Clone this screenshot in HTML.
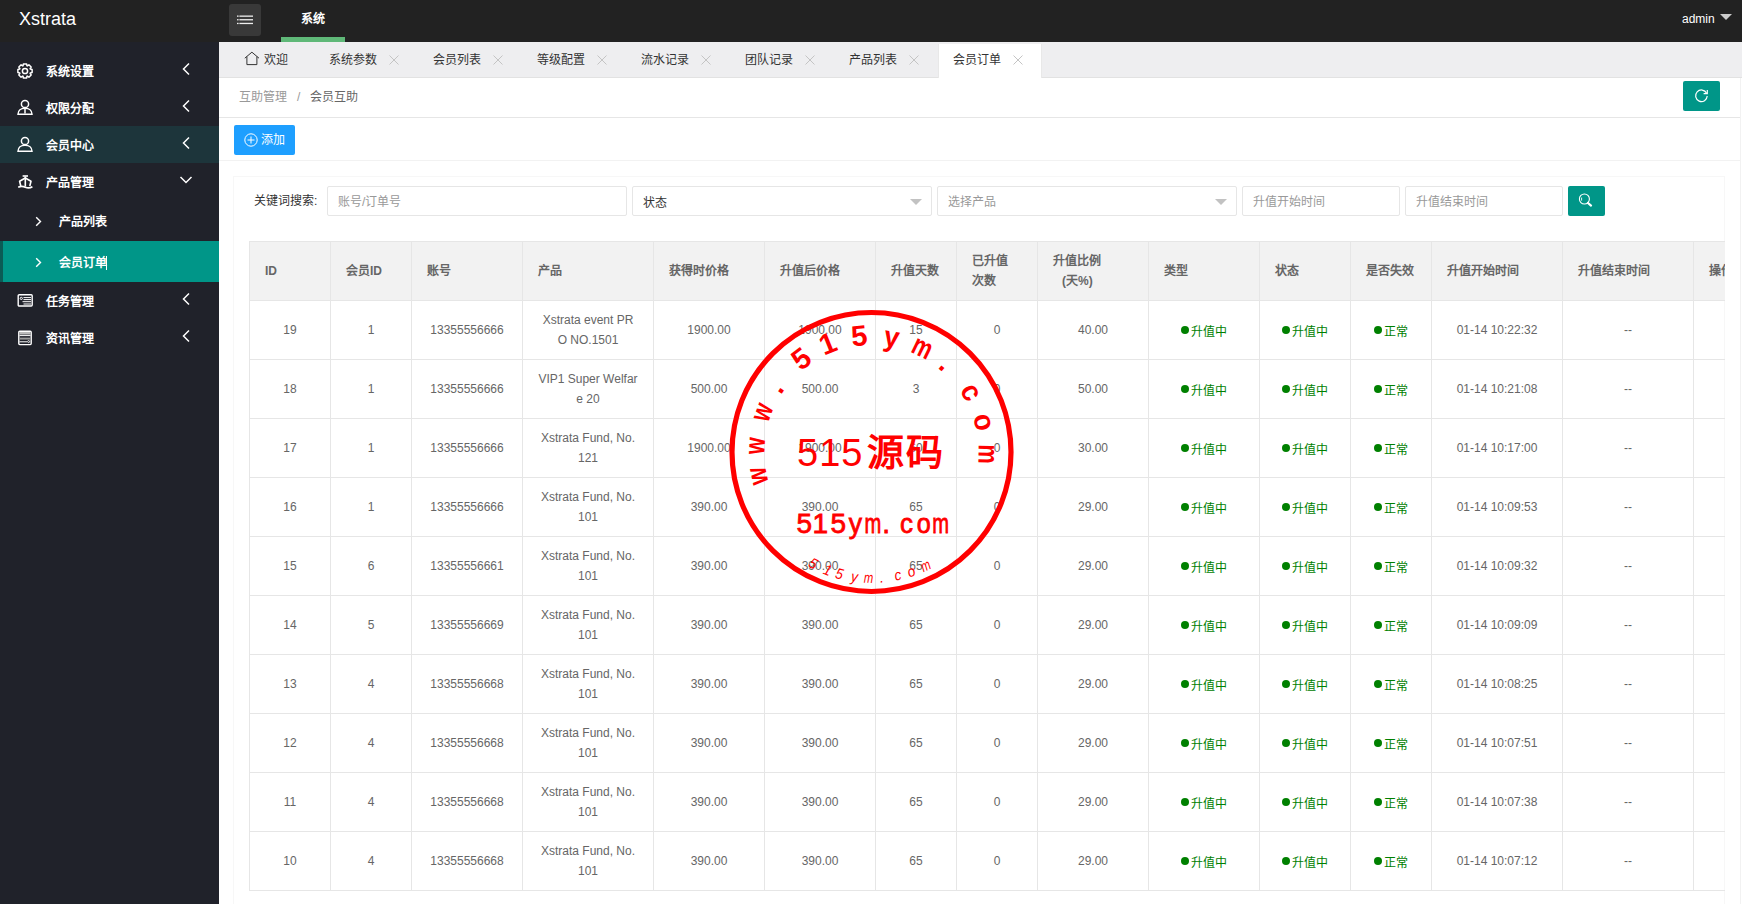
<!DOCTYPE html>
<html lang="zh-CN"><head><meta charset="utf-8"><title>admin</title>
<style>
*{margin:0;padding:0;box-sizing:border-box}
html,body{width:1742px;height:904px;overflow:hidden;background:#fff;font-family:"Liberation Sans",sans-serif;font-size:12px;color:#666}
.abs{position:absolute}
#header{position:absolute;left:0;top:0;width:1742px;height:42px;background:#222}
#logo{position:absolute;left:19px;top:9px;color:#fff;font-size:18px;line-height:20px}
#hamb{position:absolute;left:229px;top:4px;width:32px;height:32px;background:#393939;border-radius:3px}
#hamb i{position:absolute;left:8px;width:15px;height:2px;background:#eee}
#sys{position:absolute;left:301px;top:12px;color:#fff;font-size:12px;line-height:14px;font-weight:bold}
#sysbar{position:absolute;left:281px;top:37px;width:64px;height:5px;background:#5FB878}
#admin{position:absolute;left:1682px;top:12px;color:#fff;font-size:12px;line-height:14px}
#tri{position:absolute;left:1720px;top:14px;width:0;height:0;border-left:6px solid transparent;border-right:6px solid transparent;border-top:6px solid #ccc}
#side{position:absolute;left:0;top:42px;width:219px;height:862px;background:#20222A}
.nav{position:absolute;left:0;width:219px;height:37px;color:#fff;font-weight:bold;font-size:12px}
.nav .t{position:absolute;left:46px;top:13px;line-height:14px}
.nav .ic{position:absolute;left:17px;top:10px;width:16px;height:16px}
.nav .ar{position:absolute;left:181px;top:10px;width:10px;height:14px}
.nav.hov{background:#1D353B}
.sub{position:absolute;left:0;width:219px;height:41px;color:#fff;font-weight:bold;font-size:12px}
.sub .t{position:absolute;left:59px;top:15px;line-height:14px}
.sub .ar{position:absolute;left:35px;top:16px;width:7px;height:11px}
.sub.act{background:#009688}
.sub.act:before{content:"";position:absolute;left:0;top:0;width:3px;height:41px;background:#0b5b55}
#tabs{position:absolute;left:219px;top:42px;width:1523px;height:36px;background:#EEEEF0;border-bottom:1px solid #e2e2e2}
.tab{position:absolute;top:0;height:35px;color:#333;font-size:12px}
.tab .t{position:absolute;top:11px;line-height:14px;white-space:nowrap}
.tab .x{position:absolute;top:13px;width:10px;height:10px}
.tab.act{background:#fff;top:2px;height:35px;box-shadow:-1px 0 0 #e8e8e8,1px 0 0 #e8e8e8}
#crumb{position:absolute;left:219px;top:78px;width:1521px;height:40px;border-bottom:1px solid #e6e6e6;background:#fff}
#crumb .c1{position:absolute;left:20px;top:12px;color:#999;line-height:14px}
#crumb .sl{position:absolute;left:78px;top:12px;color:#999;line-height:14px}
#crumb .c2{position:absolute;left:91px;top:12px;color:#666;line-height:14px}
#refresh{position:absolute;left:1683px;top:81px;width:37px;height:30px;background:#009688;border-radius:2px}
#addbtn{position:absolute;left:234px;top:125px;width:61px;height:30px;background:#1E9FFF;border-radius:2px;color:#fff}
#addbtn .t{position:absolute;left:27px;top:8px;line-height:14px;font-size:12px}
#addline{position:absolute;left:219px;top:160px;width:1521px;height:1px;background:#f2f2f2}
#card{position:absolute;left:233px;top:176px;width:1492px;height:740px;background:#fff;border:1px solid #f7f7f7}
.lbl{position:absolute;left:254px;top:194px;color:#333;line-height:14px}
.inp{position:absolute;top:186px;height:30px;border:1px solid #e6e6e6;border-radius:2px;background:#fff}
.inp .p{position:absolute;left:10px;top:8px;line-height:14px;color:#999;white-space:nowrap}
.inp .sel{position:absolute;top:12px;width:0;height:0;border-left:6px solid transparent;border-right:6px solid transparent;border-top:6px solid #c2c2c2}
#sbtn{position:absolute;left:1568px;top:186px;width:37px;height:30px;background:#009688;border-radius:2px}
.tbl{position:absolute;left:249px;top:241px;width:1476px;height:663px;overflow:hidden}
.thead{position:absolute;background:#f2f2f2}
.hl{position:absolute;left:0;width:1600px;height:1px;background:#e6e6e6}
.vl{position:absolute;top:0;width:1px;background:#e6e6e6}
.th{position:absolute;display:flex;align-items:center;padding-left:16px;color:#666;font-weight:bold;line-height:20px;white-space:nowrap}
.td{position:absolute;display:flex;padding-left:1px;align-items:center;justify-content:center;text-align:center;line-height:20px;color:#666;white-space:nowrap}
.td.g{color:#008000}
.dot{display:inline-block;width:8px;height:8px;border-radius:50%;background:#008000;margin-right:1px;vertical-align:0px}
#stamp{position:absolute;left:0;top:0;width:1742px;height:904px;pointer-events:none}
#rline{position:absolute;left:1740px;top:78px;width:1px;height:826px;background:#f2f2f2}
.td.g span{position:relative;top:2px}
.td.g .dot{vertical-align:2px;margin-right:2px}
#caret{position:absolute;left:106px;top:256px;width:1px;height:14px;background:#fff}

</style></head><body>
<div id="header">
  <div id="logo">Xstrata</div>
  <div id="hamb"><svg class="abs" style="left:8px;top:11px;width:16px;height:14px" viewBox="0 0 16 14"><g fill="#eee"><rect x="0" y="0.5" width="1.6" height="1.3"/><rect x="2.4" y="0.5" width="13.6" height="1.3"/><rect x="0" y="4.1" width="1.6" height="1.3"/><rect x="2.4" y="4.1" width="13.6" height="1.3"/><rect x="0" y="7.8" width="1.6" height="1.3"/><rect x="2.4" y="7.8" width="13.6" height="1.3"/></g></svg></div>
  <div id="sys">系统</div>
  <div id="sysbar"></div>
  <div id="admin">admin</div>
  <div id="tri"></div>
</div>
<div id="side">
  <div class="nav" style="top:10px">
    <svg class="ic" style="top:11px" viewBox="0 0 16 16"><g fill="none" stroke="#fff" stroke-width="1.5" stroke-linejoin="round"><circle cx="8" cy="8" r="2.6"/><path d="M6.41 0.88 L9.59 0.88 L9.97 2.76 L10.31 2.90 L11.91 1.84 L14.16 4.09 L13.10 5.69 L13.24 6.03 L15.12 6.41 L15.12 9.59 L13.24 9.97 L13.10 10.31 L14.16 11.91 L11.91 14.16 L10.31 13.10 L9.97 13.24 L9.59 15.12 L6.41 15.12 L6.03 13.24 L5.69 13.10 L4.09 14.16 L1.84 11.91 L2.90 10.31 L2.76 9.97 L0.88 9.59 L0.88 6.41 L2.76 6.03 L2.90 5.69 L1.84 4.09 L4.09 1.84 L5.69 2.90 L6.03 2.76z"/></g></svg>
    <span class="t">系统设置</span>
    <svg class="ar" viewBox="0 0 10 14"><path d="M8 1.5L2.5 7 8 12.5" fill="none" stroke="#fff" stroke-width="1.5"/></svg>
  </div>
  <div class="nav" style="top:47px">
    <svg class="ic" viewBox="0 0 16 16"><g fill="none" stroke="#fff" stroke-width="1.5"><circle cx="8" cy="5" r="3.6"/><path d="M1 15.2c0-3.6 3-6 7-6s7 2.4 7 6z"/><path d="M8 9.5v5"/></g></svg>
    <span class="t">权限分配</span>
    <svg class="ar" viewBox="0 0 10 14"><path d="M8 1.5L2.5 7 8 12.5" fill="none" stroke="#fff" stroke-width="1.5"/></svg>
  </div>
  <div class="nav hov" style="top:84px">
    <svg class="ic" viewBox="0 0 16 16"><g fill="none" stroke="#fff" stroke-width="1.5"><circle cx="8" cy="5" r="3.6"/><path d="M1 15.2c0-3.6 3-6 7-6s7 2.4 7 6z"/></g></svg>
    <span class="t">会员中心</span>
    <svg class="ar" viewBox="0 0 10 14"><path d="M8 1.5L2.5 7 8 12.5" fill="none" stroke="#fff" stroke-width="1.5"/></svg>
  </div>
  <div class="nav" style="top:121px">
    <svg class="ic" viewBox="0 0 16 16"><g fill="none" stroke="#fff" stroke-width="1.6" stroke-linejoin="round"><path d="M5.6 3h5.4"/><path d="M8.3 3.5V13.5"/><path d="M8.3 5L2.6 8.3 3.8 13"/><path d="M8.3 5l5.7 3.3L12.8 13"/><path d="M1.2 14.2q3.5-1.6 7.1 0t7.1-0.4"/></g></svg>
    <span class="t">产品管理</span>
    <svg class="ar" style="left:179px;top:12px;width:14px;height:10px" viewBox="0 0 14 10"><path d="M1.5 2l5.5 5.5L12.5 2" fill="none" stroke="#fff" stroke-width="1.5"/></svg>
  </div>
  <div class="sub" style="top:158px">
    <svg class="ar" viewBox="0 0 7 11"><path d="M1.2 1.2L5.5 5.5 1.2 9.8" fill="none" stroke="#fff" stroke-width="1.4"/></svg>
    <span class="t">产品列表</span>
  </div>
  <div class="sub act" style="top:199px">
    <svg class="ar" viewBox="0 0 7 11"><path d="M1.2 1.2L5.5 5.5 1.2 9.8" fill="none" stroke="#fff" stroke-width="1.4"/></svg>
    <span class="t">会员订单</span>
  </div>
  <div class="nav" style="top:240px">
    <svg class="ic" viewBox="0 0 16 16"><g fill="none" stroke="#fff"><rect x="1.2" y="2.7" width="14" height="11.3" rx="1" stroke-width="1.4"/><circle cx="4.3" cy="6.4" r="1.1" stroke-width="1"/><path d="M6.5 5.6H14M6.5 7.6H14M5.5 9.7H14M6.5 12H14" stroke-width="1"/></g></svg>
    <span class="t">任务管理</span>
    <svg class="ar" viewBox="0 0 10 14"><path d="M8 1.5L2.5 7 8 12.5" fill="none" stroke="#fff" stroke-width="1.5"/></svg>
  </div>
  <div class="nav" style="top:277px">
    <svg class="ic" style="top:11px" viewBox="0 0 16 16"><g fill="none" stroke="#fff"><rect x="1.8" y="1.2" width="12.4" height="13.4" rx="1" stroke-width="1.4"/><rect x="2.5" y="2" width="11" height="2.6" fill="#bbb" stroke="none"/><path d="M2.5 5.6h11" stroke-width="1"/><rect x="3" y="7.6" width="10" height="2" fill="#999" stroke="none"/><path d="M2.5 11.8h7.5" stroke-width="1"/><circle cx="11.6" cy="11.6" r="1" stroke-width="0.9"/></g></svg>
    <span class="t">资讯管理</span>
    <svg class="ar" viewBox="0 0 10 14"><path d="M8 1.5L2.5 7 8 12.5" fill="none" stroke="#fff" stroke-width="1.5"/></svg>
  </div>
</div>
<div id="tabs">
  <div class="tab" style="left:12px;width:82px">
    <svg class="abs" style="left:13px;top:9px;width:16px;height:15px" viewBox="0 0 16 15"><path d="M.8 7.2L7.9 1.2l7.1 6M2.9 5.6V13.6h10V5.6" fill="none" stroke="#333" stroke-width="1"/></svg>
    <span class="t" style="left:33px">欢迎</span>
  </div>
  <div class="tab" style="left:96px;width:102px"><span class="t" style="left:14px">系统参数</span><svg class="x" style="left:74px" viewBox="0 0 10 10"><path d="M.5 .5l9 9M9.5 .5l-9 9" stroke="#c4c4c4" stroke-width="1"/></svg></div>
  <div class="tab" style="left:200px;width:102px"><span class="t" style="left:14px">会员列表</span><svg class="x" style="left:74px" viewBox="0 0 10 10"><path d="M.5 .5l9 9M9.5 .5l-9 9" stroke="#c4c4c4" stroke-width="1"/></svg></div>
  <div class="tab" style="left:304px;width:102px"><span class="t" style="left:14px">等级配置</span><svg class="x" style="left:74px" viewBox="0 0 10 10"><path d="M.5 .5l9 9M9.5 .5l-9 9" stroke="#c4c4c4" stroke-width="1"/></svg></div>
  <div class="tab" style="left:408px;width:102px"><span class="t" style="left:14px">流水记录</span><svg class="x" style="left:74px" viewBox="0 0 10 10"><path d="M.5 .5l9 9M9.5 .5l-9 9" stroke="#c4c4c4" stroke-width="1"/></svg></div>
  <div class="tab" style="left:512px;width:102px"><span class="t" style="left:14px">团队记录</span><svg class="x" style="left:74px" viewBox="0 0 10 10"><path d="M.5 .5l9 9M9.5 .5l-9 9" stroke="#c4c4c4" stroke-width="1"/></svg></div>
  <div class="tab" style="left:616px;width:102px"><span class="t" style="left:14px">产品列表</span><svg class="x" style="left:74px" viewBox="0 0 10 10"><path d="M.5 .5l9 9M9.5 .5l-9 9" stroke="#c4c4c4" stroke-width="1"/></svg></div>
  <div class="tab act" style="left:720px;width:102px"><span class="t" style="left:14px;top:9px">会员订单</span><svg class="x" style="left:74px;top:11px" viewBox="0 0 10 10"><path d="M.5 .5l9 9M9.5 .5l-9 9" stroke="#c4c4c4" stroke-width="1"/></svg></div>
</div>
<div id="crumb"><span class="c1">互助管理</span><span class="sl">/</span><span class="c2">会员互助</span></div>
<div id="refresh"><svg class="abs" style="left:11px;top:7px;width:15px;height:15px" viewBox="0 0 15 15"><path d="M12.6 5.2A5.8 5.8 0 1 0 13.2 8" fill="none" stroke="#fff" stroke-width="1.2"/><path d="M13.3 2v3.7H9.6" fill="none" stroke="#fff" stroke-width="1.2"/></svg></div>
<div id="addbtn"><svg class="abs" style="left:10px;top:8px;width:14px;height:14px" viewBox="0 0 14 14"><g fill="none" stroke="#fff" stroke-width="1"><circle cx="7" cy="7" r="6.2"/><path d="M7 3.5v7M3.5 7h7"/></g></svg><span class="t">添加</span></div>
<div id="addline"></div>
<div id="card"></div>
<div class="lbl">关键词搜索:</div>
<div class="inp" style="left:327px;width:300px"><span class="p">账号/订单号</span></div>
<div class="inp" style="left:632px;width:300px"><span class="p" style="color:#333;top:9px">状态</span><i class="sel" style="left:277px"></i></div>
<div class="inp" style="left:937px;width:300px"><span class="p">选择产品</span><i class="sel" style="left:277px"></i></div>
<div class="inp" style="left:1242px;width:158px"><span class="p">升值开始时间</span></div>
<div class="inp" style="left:1405px;width:158px"><span class="p">升值结束时间</span></div>
<div id="sbtn"><svg class="abs" style="left:9px;top:5px;width:16px;height:16px" viewBox="0 0 16 16"><g fill="none" stroke="#fff"><circle cx="7.4" cy="8" r="5" stroke-width="1.1"/><path d="M4.6 6.6v3" stroke-width="0.9"/><path d="M11 12l3 2.6" stroke-width="2.2" stroke-linecap="round"/></g></svg></div>
<div id="rline"></div>
<div id="caret"></div>

<div class="tbl">
<div class="thead" style="left:0;top:0;width:1525px;height:59px"></div>
<div class="hl" style="top:0px"></div>
<div class="hl" style="top:59px"></div>
<div class="hl" style="top:118px"></div>
<div class="hl" style="top:177px"></div>
<div class="hl" style="top:236px"></div>
<div class="hl" style="top:295px"></div>
<div class="hl" style="top:354px"></div>
<div class="hl" style="top:413px"></div>
<div class="hl" style="top:472px"></div>
<div class="hl" style="top:531px"></div>
<div class="hl" style="top:590px"></div>
<div class="hl" style="top:649px"></div>
<div class="vl" style="left:0px;height:650px"></div>
<div class="vl" style="left:81px;height:650px"></div>
<div class="vl" style="left:162px;height:650px"></div>
<div class="vl" style="left:273px;height:650px"></div>
<div class="vl" style="left:404px;height:650px"></div>
<div class="vl" style="left:515px;height:650px"></div>
<div class="vl" style="left:626px;height:650px"></div>
<div class="vl" style="left:707px;height:650px"></div>
<div class="vl" style="left:788px;height:650px"></div>
<div class="vl" style="left:899px;height:650px"></div>
<div class="vl" style="left:1010px;height:650px"></div>
<div class="vl" style="left:1101px;height:650px"></div>
<div class="vl" style="left:1182px;height:650px"></div>
<div class="vl" style="left:1313px;height:650px"></div>
<div class="vl" style="left:1444px;height:650px"></div>
<div class="vl" style="left:1525px;height:650px"></div>
<div class="th" style="left:0px;width:81px;top:0;height:59px"><span>ID</span></div>
<div class="th" style="left:81px;width:81px;top:0;height:59px"><span>会员ID</span></div>
<div class="th" style="left:162px;width:111px;top:0;height:59px"><span>账号</span></div>
<div class="th" style="left:273px;width:131px;top:0;height:59px"><span>产品</span></div>
<div class="th" style="left:404px;width:111px;top:0;height:59px"><span>获得时价格</span></div>
<div class="th" style="left:515px;width:111px;top:0;height:59px"><span>升值后价格</span></div>
<div class="th" style="left:626px;width:81px;top:0;height:59px"><span>升值天数</span></div>
<div class="th" style="left:707px;width:81px;top:0;height:59px"><span>已升值<br>次数</span></div>
<div class="th" style="left:788px;width:111px;top:0;height:59px"><span>升值比例<br><span style="margin-left:9px">(天%)</span></span></div>
<div class="th" style="left:899px;width:111px;top:0;height:59px"><span>类型</span></div>
<div class="th" style="left:1010px;width:91px;top:0;height:59px"><span>状态</span></div>
<div class="th" style="left:1101px;width:81px;top:0;height:59px"><span>是否失效</span></div>
<div class="th" style="left:1182px;width:131px;top:0;height:59px"><span>升值开始时间</span></div>
<div class="th" style="left:1313px;width:131px;top:0;height:59px"><span>升值结束时间</span></div>
<div class="th" style="left:1444px;width:81px;top:0;height:59px"><span>操作</span></div>
<div class="td" style="left:0px;width:81px;top:59px;height:59px"><span>19</span></div>
<div class="td" style="left:81px;width:81px;top:59px;height:59px"><span>1</span></div>
<div class="td" style="left:162px;width:111px;top:59px;height:59px"><span>13355556666</span></div>
<div class="td" style="left:273px;width:131px;top:59px;height:59px"><span>Xstrata event PR<br>O NO.1501</span></div>
<div class="td" style="left:404px;width:111px;top:59px;height:59px"><span>1900.00</span></div>
<div class="td" style="left:515px;width:111px;top:59px;height:59px"><span>1900.00</span></div>
<div class="td" style="left:626px;width:81px;top:59px;height:59px"><span>15</span></div>
<div class="td" style="left:707px;width:81px;top:59px;height:59px"><span>0</span></div>
<div class="td" style="left:788px;width:111px;top:59px;height:59px"><span>40.00</span></div>
<div class="td g" style="left:899px;width:111px;top:59px;height:59px"><span><i class="dot"></i>升值中</span></div>
<div class="td g" style="left:1010px;width:91px;top:59px;height:59px"><span><i class="dot"></i>升值中</span></div>
<div class="td g" style="left:1101px;width:81px;top:59px;height:59px"><span><i class="dot"></i>正常</span></div>
<div class="td" style="left:1182px;width:131px;top:59px;height:59px"><span>01-14 10:22:32</span></div>
<div class="td" style="left:1313px;width:131px;top:59px;height:59px"><span>--</span></div>
<div class="td" style="left:1444px;width:81px;top:59px;height:59px"><span></span></div>
<div class="td" style="left:0px;width:81px;top:118px;height:59px"><span>18</span></div>
<div class="td" style="left:81px;width:81px;top:118px;height:59px"><span>1</span></div>
<div class="td" style="left:162px;width:111px;top:118px;height:59px"><span>13355556666</span></div>
<div class="td" style="left:273px;width:131px;top:118px;height:59px"><span>VIP1 Super Welfar<br>e 20</span></div>
<div class="td" style="left:404px;width:111px;top:118px;height:59px"><span>500.00</span></div>
<div class="td" style="left:515px;width:111px;top:118px;height:59px"><span>500.00</span></div>
<div class="td" style="left:626px;width:81px;top:118px;height:59px"><span>3</span></div>
<div class="td" style="left:707px;width:81px;top:118px;height:59px"><span>0</span></div>
<div class="td" style="left:788px;width:111px;top:118px;height:59px"><span>50.00</span></div>
<div class="td g" style="left:899px;width:111px;top:118px;height:59px"><span><i class="dot"></i>升值中</span></div>
<div class="td g" style="left:1010px;width:91px;top:118px;height:59px"><span><i class="dot"></i>升值中</span></div>
<div class="td g" style="left:1101px;width:81px;top:118px;height:59px"><span><i class="dot"></i>正常</span></div>
<div class="td" style="left:1182px;width:131px;top:118px;height:59px"><span>01-14 10:21:08</span></div>
<div class="td" style="left:1313px;width:131px;top:118px;height:59px"><span>--</span></div>
<div class="td" style="left:1444px;width:81px;top:118px;height:59px"><span></span></div>
<div class="td" style="left:0px;width:81px;top:177px;height:59px"><span>17</span></div>
<div class="td" style="left:81px;width:81px;top:177px;height:59px"><span>1</span></div>
<div class="td" style="left:162px;width:111px;top:177px;height:59px"><span>13355556666</span></div>
<div class="td" style="left:273px;width:131px;top:177px;height:59px"><span>Xstrata Fund, No.<br>121</span></div>
<div class="td" style="left:404px;width:111px;top:177px;height:59px"><span>1900.00</span></div>
<div class="td" style="left:515px;width:111px;top:177px;height:59px"><span>1900.00</span></div>
<div class="td" style="left:626px;width:81px;top:177px;height:59px"><span>60</span></div>
<div class="td" style="left:707px;width:81px;top:177px;height:59px"><span>0</span></div>
<div class="td" style="left:788px;width:111px;top:177px;height:59px"><span>30.00</span></div>
<div class="td g" style="left:899px;width:111px;top:177px;height:59px"><span><i class="dot"></i>升值中</span></div>
<div class="td g" style="left:1010px;width:91px;top:177px;height:59px"><span><i class="dot"></i>升值中</span></div>
<div class="td g" style="left:1101px;width:81px;top:177px;height:59px"><span><i class="dot"></i>正常</span></div>
<div class="td" style="left:1182px;width:131px;top:177px;height:59px"><span>01-14 10:17:00</span></div>
<div class="td" style="left:1313px;width:131px;top:177px;height:59px"><span>--</span></div>
<div class="td" style="left:1444px;width:81px;top:177px;height:59px"><span></span></div>
<div class="td" style="left:0px;width:81px;top:236px;height:59px"><span>16</span></div>
<div class="td" style="left:81px;width:81px;top:236px;height:59px"><span>1</span></div>
<div class="td" style="left:162px;width:111px;top:236px;height:59px"><span>13355556666</span></div>
<div class="td" style="left:273px;width:131px;top:236px;height:59px"><span>Xstrata Fund, No.<br>101</span></div>
<div class="td" style="left:404px;width:111px;top:236px;height:59px"><span>390.00</span></div>
<div class="td" style="left:515px;width:111px;top:236px;height:59px"><span>390.00</span></div>
<div class="td" style="left:626px;width:81px;top:236px;height:59px"><span>65</span></div>
<div class="td" style="left:707px;width:81px;top:236px;height:59px"><span>0</span></div>
<div class="td" style="left:788px;width:111px;top:236px;height:59px"><span>29.00</span></div>
<div class="td g" style="left:899px;width:111px;top:236px;height:59px"><span><i class="dot"></i>升值中</span></div>
<div class="td g" style="left:1010px;width:91px;top:236px;height:59px"><span><i class="dot"></i>升值中</span></div>
<div class="td g" style="left:1101px;width:81px;top:236px;height:59px"><span><i class="dot"></i>正常</span></div>
<div class="td" style="left:1182px;width:131px;top:236px;height:59px"><span>01-14 10:09:53</span></div>
<div class="td" style="left:1313px;width:131px;top:236px;height:59px"><span>--</span></div>
<div class="td" style="left:1444px;width:81px;top:236px;height:59px"><span></span></div>
<div class="td" style="left:0px;width:81px;top:295px;height:59px"><span>15</span></div>
<div class="td" style="left:81px;width:81px;top:295px;height:59px"><span>6</span></div>
<div class="td" style="left:162px;width:111px;top:295px;height:59px"><span>13355556661</span></div>
<div class="td" style="left:273px;width:131px;top:295px;height:59px"><span>Xstrata Fund, No.<br>101</span></div>
<div class="td" style="left:404px;width:111px;top:295px;height:59px"><span>390.00</span></div>
<div class="td" style="left:515px;width:111px;top:295px;height:59px"><span>390.00</span></div>
<div class="td" style="left:626px;width:81px;top:295px;height:59px"><span>65</span></div>
<div class="td" style="left:707px;width:81px;top:295px;height:59px"><span>0</span></div>
<div class="td" style="left:788px;width:111px;top:295px;height:59px"><span>29.00</span></div>
<div class="td g" style="left:899px;width:111px;top:295px;height:59px"><span><i class="dot"></i>升值中</span></div>
<div class="td g" style="left:1010px;width:91px;top:295px;height:59px"><span><i class="dot"></i>升值中</span></div>
<div class="td g" style="left:1101px;width:81px;top:295px;height:59px"><span><i class="dot"></i>正常</span></div>
<div class="td" style="left:1182px;width:131px;top:295px;height:59px"><span>01-14 10:09:32</span></div>
<div class="td" style="left:1313px;width:131px;top:295px;height:59px"><span>--</span></div>
<div class="td" style="left:1444px;width:81px;top:295px;height:59px"><span></span></div>
<div class="td" style="left:0px;width:81px;top:354px;height:59px"><span>14</span></div>
<div class="td" style="left:81px;width:81px;top:354px;height:59px"><span>5</span></div>
<div class="td" style="left:162px;width:111px;top:354px;height:59px"><span>13355556669</span></div>
<div class="td" style="left:273px;width:131px;top:354px;height:59px"><span>Xstrata Fund, No.<br>101</span></div>
<div class="td" style="left:404px;width:111px;top:354px;height:59px"><span>390.00</span></div>
<div class="td" style="left:515px;width:111px;top:354px;height:59px"><span>390.00</span></div>
<div class="td" style="left:626px;width:81px;top:354px;height:59px"><span>65</span></div>
<div class="td" style="left:707px;width:81px;top:354px;height:59px"><span>0</span></div>
<div class="td" style="left:788px;width:111px;top:354px;height:59px"><span>29.00</span></div>
<div class="td g" style="left:899px;width:111px;top:354px;height:59px"><span><i class="dot"></i>升值中</span></div>
<div class="td g" style="left:1010px;width:91px;top:354px;height:59px"><span><i class="dot"></i>升值中</span></div>
<div class="td g" style="left:1101px;width:81px;top:354px;height:59px"><span><i class="dot"></i>正常</span></div>
<div class="td" style="left:1182px;width:131px;top:354px;height:59px"><span>01-14 10:09:09</span></div>
<div class="td" style="left:1313px;width:131px;top:354px;height:59px"><span>--</span></div>
<div class="td" style="left:1444px;width:81px;top:354px;height:59px"><span></span></div>
<div class="td" style="left:0px;width:81px;top:413px;height:59px"><span>13</span></div>
<div class="td" style="left:81px;width:81px;top:413px;height:59px"><span>4</span></div>
<div class="td" style="left:162px;width:111px;top:413px;height:59px"><span>13355556668</span></div>
<div class="td" style="left:273px;width:131px;top:413px;height:59px"><span>Xstrata Fund, No.<br>101</span></div>
<div class="td" style="left:404px;width:111px;top:413px;height:59px"><span>390.00</span></div>
<div class="td" style="left:515px;width:111px;top:413px;height:59px"><span>390.00</span></div>
<div class="td" style="left:626px;width:81px;top:413px;height:59px"><span>65</span></div>
<div class="td" style="left:707px;width:81px;top:413px;height:59px"><span>0</span></div>
<div class="td" style="left:788px;width:111px;top:413px;height:59px"><span>29.00</span></div>
<div class="td g" style="left:899px;width:111px;top:413px;height:59px"><span><i class="dot"></i>升值中</span></div>
<div class="td g" style="left:1010px;width:91px;top:413px;height:59px"><span><i class="dot"></i>升值中</span></div>
<div class="td g" style="left:1101px;width:81px;top:413px;height:59px"><span><i class="dot"></i>正常</span></div>
<div class="td" style="left:1182px;width:131px;top:413px;height:59px"><span>01-14 10:08:25</span></div>
<div class="td" style="left:1313px;width:131px;top:413px;height:59px"><span>--</span></div>
<div class="td" style="left:1444px;width:81px;top:413px;height:59px"><span></span></div>
<div class="td" style="left:0px;width:81px;top:472px;height:59px"><span>12</span></div>
<div class="td" style="left:81px;width:81px;top:472px;height:59px"><span>4</span></div>
<div class="td" style="left:162px;width:111px;top:472px;height:59px"><span>13355556668</span></div>
<div class="td" style="left:273px;width:131px;top:472px;height:59px"><span>Xstrata Fund, No.<br>101</span></div>
<div class="td" style="left:404px;width:111px;top:472px;height:59px"><span>390.00</span></div>
<div class="td" style="left:515px;width:111px;top:472px;height:59px"><span>390.00</span></div>
<div class="td" style="left:626px;width:81px;top:472px;height:59px"><span>65</span></div>
<div class="td" style="left:707px;width:81px;top:472px;height:59px"><span>0</span></div>
<div class="td" style="left:788px;width:111px;top:472px;height:59px"><span>29.00</span></div>
<div class="td g" style="left:899px;width:111px;top:472px;height:59px"><span><i class="dot"></i>升值中</span></div>
<div class="td g" style="left:1010px;width:91px;top:472px;height:59px"><span><i class="dot"></i>升值中</span></div>
<div class="td g" style="left:1101px;width:81px;top:472px;height:59px"><span><i class="dot"></i>正常</span></div>
<div class="td" style="left:1182px;width:131px;top:472px;height:59px"><span>01-14 10:07:51</span></div>
<div class="td" style="left:1313px;width:131px;top:472px;height:59px"><span>--</span></div>
<div class="td" style="left:1444px;width:81px;top:472px;height:59px"><span></span></div>
<div class="td" style="left:0px;width:81px;top:531px;height:59px"><span>11</span></div>
<div class="td" style="left:81px;width:81px;top:531px;height:59px"><span>4</span></div>
<div class="td" style="left:162px;width:111px;top:531px;height:59px"><span>13355556668</span></div>
<div class="td" style="left:273px;width:131px;top:531px;height:59px"><span>Xstrata Fund, No.<br>101</span></div>
<div class="td" style="left:404px;width:111px;top:531px;height:59px"><span>390.00</span></div>
<div class="td" style="left:515px;width:111px;top:531px;height:59px"><span>390.00</span></div>
<div class="td" style="left:626px;width:81px;top:531px;height:59px"><span>65</span></div>
<div class="td" style="left:707px;width:81px;top:531px;height:59px"><span>0</span></div>
<div class="td" style="left:788px;width:111px;top:531px;height:59px"><span>29.00</span></div>
<div class="td g" style="left:899px;width:111px;top:531px;height:59px"><span><i class="dot"></i>升值中</span></div>
<div class="td g" style="left:1010px;width:91px;top:531px;height:59px"><span><i class="dot"></i>升值中</span></div>
<div class="td g" style="left:1101px;width:81px;top:531px;height:59px"><span><i class="dot"></i>正常</span></div>
<div class="td" style="left:1182px;width:131px;top:531px;height:59px"><span>01-14 10:07:38</span></div>
<div class="td" style="left:1313px;width:131px;top:531px;height:59px"><span>--</span></div>
<div class="td" style="left:1444px;width:81px;top:531px;height:59px"><span></span></div>
<div class="td" style="left:0px;width:81px;top:590px;height:59px"><span>10</span></div>
<div class="td" style="left:81px;width:81px;top:590px;height:59px"><span>4</span></div>
<div class="td" style="left:162px;width:111px;top:590px;height:59px"><span>13355556668</span></div>
<div class="td" style="left:273px;width:131px;top:590px;height:59px"><span>Xstrata Fund, No.<br>101</span></div>
<div class="td" style="left:404px;width:111px;top:590px;height:59px"><span>390.00</span></div>
<div class="td" style="left:515px;width:111px;top:590px;height:59px"><span>390.00</span></div>
<div class="td" style="left:626px;width:81px;top:590px;height:59px"><span>65</span></div>
<div class="td" style="left:707px;width:81px;top:590px;height:59px"><span>0</span></div>
<div class="td" style="left:788px;width:111px;top:590px;height:59px"><span>29.00</span></div>
<div class="td g" style="left:899px;width:111px;top:590px;height:59px"><span><i class="dot"></i>升值中</span></div>
<div class="td g" style="left:1010px;width:91px;top:590px;height:59px"><span><i class="dot"></i>升值中</span></div>
<div class="td g" style="left:1101px;width:81px;top:590px;height:59px"><span><i class="dot"></i>正常</span></div>
<div class="td" style="left:1182px;width:131px;top:590px;height:59px"><span>01-14 10:07:12</span></div>
<div class="td" style="left:1313px;width:131px;top:590px;height:59px"><span>--</span></div>
<div class="td" style="left:1444px;width:81px;top:590px;height:59px"><span></span></div>
</div>
<svg id="stamp" width="1742" height="904" viewBox="0 0 1742 904">
  <circle cx="871.5" cy="452" r="139.5" fill="none" stroke="#f00" stroke-width="5.2"/>
  <text x="0" y="0" transform="translate(766.84 474.25) rotate(-102.0) scale(0.75 1)" text-anchor="middle" fill="#f00" font-family="Liberation Sans" font-weight="bold" font-size="29">w</text>
<text x="0" y="0" transform="translate(764.65 446.40) rotate(-87.0) scale(0.75 1)" text-anchor="middle" fill="#f00" font-family="Liberation Sans" font-weight="bold" font-size="29">w</text>
<text x="0" y="0" transform="translate(770.95 415.40) rotate(-70.0) scale(0.75 1)" text-anchor="middle" fill="#f00" font-family="Liberation Sans" font-weight="bold" font-size="29">w</text>
<text x="0" y="0" transform="translate(782.79 392.17) rotate(-56.0) scale(0.95 1)" text-anchor="middle" fill="#f00" font-family="Liberation Sans" font-weight="bold" font-size="29">.</text>
<text x="0" y="0" transform="translate(807.11 366.55) rotate(-37.0) scale(1.00 1)" text-anchor="middle" fill="#f00" font-family="Liberation Sans" font-weight="bold" font-size="29">5</text>
<text x="0" y="0" transform="translate(831.42 352.79) rotate(-22.0) scale(1.00 1)" text-anchor="middle" fill="#f00" font-family="Liberation Sans" font-weight="bold" font-size="29">1</text>
<text x="0" y="0" transform="translate(860.32 345.59) rotate(-6.0) scale(1.00 1)" text-anchor="middle" fill="#f00" font-family="Liberation Sans" font-weight="bold" font-size="29">5</text>
<text x="0" y="0" transform="translate(890.08 346.63) rotate(10.0) scale(0.95 1)" text-anchor="middle" fill="#f00" font-family="Liberation Sans" font-weight="bold" font-size="29">y</text>
<text x="0" y="0" transform="translate(918.41 355.83) rotate(26.0) scale(0.75 1)" text-anchor="middle" fill="#f00" font-family="Liberation Sans" font-weight="bold" font-size="29">m</text>
<text x="0" y="0" transform="translate(940.28 370.03) rotate(40.0) scale(0.95 1)" text-anchor="middle" fill="#f00" font-family="Liberation Sans" font-weight="bold" font-size="29">.</text>
<text x="0" y="0" transform="translate(963.22 396.89) rotate(59.0) scale(0.95 1)" text-anchor="middle" fill="#f00" font-family="Liberation Sans" font-weight="bold" font-size="29">c</text>
<text x="0" y="0" transform="translate(974.85 424.31) rotate(75.0) scale(0.95 1)" text-anchor="middle" fill="#f00" font-family="Liberation Sans" font-weight="bold" font-size="29">o</text>
<text x="0" y="0" transform="translate(978.48 453.87) rotate(91.0) scale(0.75 1)" text-anchor="middle" fill="#f00" font-family="Liberation Sans" font-weight="bold" font-size="29">m</text>
<text x="0" y="0" transform="translate(810.81 568.09) rotate(27.6) scale(0.90 1)" text-anchor="middle" fill="#f00" font-family="Liberation Sans" font-style="italic" font-size="15">5</text>
<text x="0" y="0" transform="translate(825.84 574.78) rotate(20.4) scale(0.90 1)" text-anchor="middle" fill="#f00" font-family="Liberation Sans" font-style="italic" font-size="15">1</text>
<text x="0" y="0" transform="translate(838.04 578.65) rotate(14.8) scale(0.90 1)" text-anchor="middle" fill="#f00" font-family="Liberation Sans" font-style="italic" font-size="15">5</text>
<text x="0" y="0" transform="translate(853.95 581.82) rotate(7.7) scale(0.90 1)" text-anchor="middle" fill="#f00" font-family="Liberation Sans" font-style="italic" font-size="15">y</text>
<text x="0" y="0" transform="translate(868.53 582.97) rotate(1.3) scale(0.75 1)" text-anchor="middle" fill="#f00" font-family="Liberation Sans" font-style="italic" font-size="15">m</text>
<text x="0" y="0" transform="translate(882.23 582.56) rotate(-4.7) scale(0.90 1)" text-anchor="middle" fill="#f00" font-family="Liberation Sans" font-style="italic" font-size="15">.</text>
<text x="0" y="0" transform="translate(898.74 580.14) rotate(-12.0) scale(0.90 1)" text-anchor="middle" fill="#f00" font-family="Liberation Sans" font-style="italic" font-size="15">c</text>
<text x="0" y="0" transform="translate(912.85 576.30) rotate(-18.4) scale(0.90 1)" text-anchor="middle" fill="#f00" font-family="Liberation Sans" font-style="italic" font-size="15">o</text>
<text x="0" y="0" transform="translate(927.69 570.34) rotate(-25.4) scale(0.75 1)" text-anchor="middle" fill="#f00" font-family="Liberation Sans" font-style="italic" font-size="15">m</text>
  <text x="797" y="465.5" fill="#f00" font-family="Liberation Sans" font-size="38" letter-spacing="1">515</text>
  <text x="867" y="466" fill="#f00" font-family="Liberation Serif" font-weight="bold" font-size="37" letter-spacing="2">源码</text>
  <text transform="translate(804.3 533) scale(1.00 1)" text-anchor="middle" fill="#f00" font-family="Liberation Sans" font-size="28" stroke="#f00" stroke-width="0.8">5</text>
  <text transform="translate(820.3 533) scale(1.00 1)" text-anchor="middle" fill="#f00" font-family="Liberation Sans" font-size="28" stroke="#f00" stroke-width="0.8">1</text>
  <text transform="translate(838.4 533) scale(1.00 1)" text-anchor="middle" fill="#f00" font-family="Liberation Sans" font-size="28" stroke="#f00" stroke-width="0.8">5</text>
  <text transform="translate(855.5 533) scale(0.95 1)" text-anchor="middle" fill="#f00" font-family="Liberation Sans" font-size="28" stroke="#f00" stroke-width="0.8">y</text>
  <text transform="translate(872.8 533) scale(0.72 1)" text-anchor="middle" fill="#f00" font-family="Liberation Sans" font-size="28" stroke="#f00" stroke-width="0.8">m</text>
  <text transform="translate(886.1 533) scale(1.00 1)" text-anchor="middle" fill="#f00" font-family="Liberation Sans" font-size="28" stroke="#f00" stroke-width="0.8">.</text>
  <text transform="translate(906.6 533) scale(0.93 1)" text-anchor="middle" fill="#f00" font-family="Liberation Sans" font-size="28" stroke="#f00" stroke-width="0.8">c</text>
  <text transform="translate(923.8 533) scale(0.90 1)" text-anchor="middle" fill="#f00" font-family="Liberation Sans" font-size="28" stroke="#f00" stroke-width="0.8">o</text>
  <text transform="translate(940.6 533) scale(0.72 1)" text-anchor="middle" fill="#f00" font-family="Liberation Sans" font-size="28" stroke="#f00" stroke-width="0.8">m</text>
</svg>

</body></html>
